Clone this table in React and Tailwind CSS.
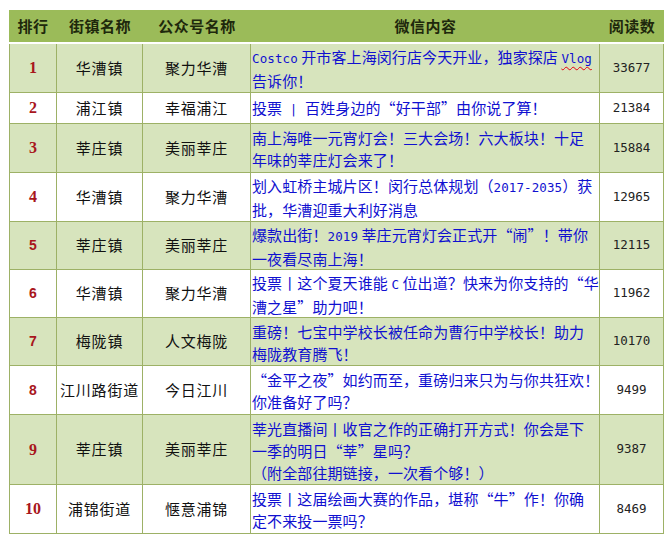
import React from "react";

const rows = [
  { rank: "1", serif: true, town: "华漕镇", acct: "聚力华漕", lines: ["Costco 开市客上海闵行店今天开业，独家探店 @Vlog", "告诉你！"], count: "33677", h: "h-[49px]" },
  { rank: "2", serif: true, town: "浦江镇", acct: "幸福浦江", lines: ["投票 | 百姓身边的“好干部”由你说了算！"], count: "21384", h: "h-[31px]" },
  { rank: "3", serif: true, town: "莘庄镇", acct: "美丽莘庄", lines: ["南上海唯一元宵灯会！三大会场！六大板块！十足", "年味的莘庄灯会来了！"], count: "15884", h: "h-[49px]" },
  { rank: "4", serif: true, town: "华漕镇", acct: "聚力华漕", lines: ["划入虹桥主城片区！闵行总体规划（2017-2035）获", "批，华漕迎重大利好消息"], count: "12965", h: "h-[49px]" },
  { rank: "5", serif: false, town: "莘庄镇", acct: "美丽莘庄", lines: ["爆款出街！2019 莘庄元宵灯会正式开“闹”！带你", "一夜看尽南上海！"], count: "12115", h: "h-[48px]" },
  { rank: "6", serif: false, town: "华漕镇", acct: "聚力华漕", lines: ["投票丨这个夏天谁能 C 位出道？快来为你支持的“华", "漕之星”助力吧！"], count: "11962", h: "h-[48px]" },
  { rank: "7", serif: false, town: "梅陇镇", acct: "人文梅陇", lines: ["重磅！七宝中学校长被任命为曹行中学校长！助力", "梅陇教育腾飞！"], count: "10170", h: "h-[48px]" },
  { rank: "8", serif: false, town: "江川路街道", acct: "今日江川", lines: ["“金平之夜”如约而至，重磅归来只为与你共狂欢！", "你准备好了吗？"], count: "9499", h: "h-[49px]" },
  { rank: "9", serif: true, town: "莘庄镇", acct: "美丽莘庄", lines: ["莘光直播间丨收官之作的正确打开方式！你会是下", "一季的明日“莘”星吗？", "（附全部往期链接，一次看个够！）"], count: "9387", h: "h-[70px]" },
  { rank: "10", serif: true, town: "浦锦街道", acct: "惬意浦锦", lines: ["投票丨这届绘画大赛的作品，堪称“牛”作！你确", "定不来投一票吗？"], count: "8469", h: "h-[49px]" },
];

function Line({ text }) {
  const parts = text.split(/(@?[A-Za-z0-9\-]+| \| )/).filter((p) => p !== "");
  return (
    <div className="whitespace-nowrap">
      {parts.map((p, i) => {
        if (p === " | ") {
          return (
            <span key={i} className="font-['DejaVu_Sans_Mono'] text-[12.5px] whitespace-pre">
              {" | "}
            </span>
          );
        }
        if (/^@?[A-Za-z0-9\-]+$/.test(p)) {
          if (p.startsWith("@")) {
            return (
              <span key={i} className="font-['DejaVu_Sans_Mono'] text-[12.5px] underline decoration-wavy decoration-red-600 decoration-1 underline-offset-[3px]">
                {p.slice(1)}
              </span>
            );
          }
          return (
            <span key={i} className="font-['DejaVu_Sans_Mono'] text-[12.5px]">
              {p}
            </span>
          );
        }
        return <span key={i}>{p}</span>;
      })}
    </div>
  );
}

export default function App() {
  const grid = "grid grid-cols-[48px_86px_108px_349px_64px]";
  const cell = "border-r border-b border-[#9db166] flex items-center justify-center";
  return (
    <div className="w-[671px] h-[540px] bg-white pt-[10px] pl-[9px] font-['Noto_Sans_CJK_SC',sans-serif]">
      <div className="w-[655px]">
        <div className={`${grid} h-[32px] bg-[#9bbb59] text-[15px] font-bold text-[#1e280c] tracking-[0.5px]`}>
          <div className="flex items-center justify-center">排行</div>
          <div className="flex items-center justify-center">街镇名称</div>
          <div className="flex items-center justify-center">公众号名称</div>
          <div className="flex items-center justify-center">微信内容</div>
          <div className="flex items-center justify-center">阅读数</div>
        </div>
        <div className="h-[2px] bg-white" />
        {rows.map((r, idx) => (
          <div key={r.rank} className={`${grid} ${r.h} ${idx % 2 === 0 ? "bg-[#d7e4bd]" : "bg-white"}`}>
            <div className={`${cell} border-l`}>
              {r.serif ? (
                <span className="font-['Liberation_Serif',serif] font-bold text-[16px] text-[#a8161c]">{r.rank}</span>
              ) : (
                <span className="font-['Liberation_Sans',sans-serif] font-bold text-[14px] text-[#a8161c]">{r.rank}</span>
              )}
            </div>
            <div className={`${cell} text-[15px] tracking-[0.8px] text-[#111]`}>{r.town}</div>
            <div className={`${cell} text-[15px] tracking-[0.8px] text-[#111]`}>{r.acct}</div>
            <div className="border-r border-b border-[#9db166] flex flex-col justify-center pl-[1px] pt-[2px] text-[15px] leading-[22px] tracking-[0.1px] text-[#1010d0] overflow-hidden">
              {r.lines.map((l, i) => (
                <Line key={i} text={l} />
              ))}
            </div>
            <div className={`${cell} font-['DejaVu_Sans_Mono',monospace] text-[12.5px] text-[#222]`}>{r.count}</div>
          </div>
        ))}
      </div>
    </div>
  );
}
